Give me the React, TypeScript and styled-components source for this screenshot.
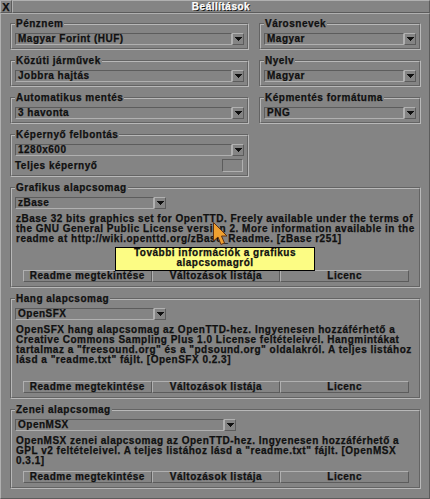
import React from "react";
import styled, { createGlobalStyle } from "styled-components";

const C = {
  bg: "#848484",
  light: "#b0b0b0",
  dark: "#5c5c5c",
  text: "#101010",
};

const Global = createGlobalStyle`
  html, body { margin: 0; padding: 0; background: ${C.bg}; }
  body { font-family: "Liberation Sans", Arial, sans-serif; }
`;

const Window = styled.div`
  position: relative;
  width: 430px;
  height: 499px;
  display: flex;
  flex-direction: column;
  background: ${C.bg};
  font: bold 10px/10px "Liberation Sans", Arial, sans-serif;
  letter-spacing: 0.5px;
  color: ${C.text};
  -webkit-text-stroke: 0.25px ${C.text};
  overflow: hidden;
`;

const TitleBar = styled.div`
  display: flex;
  height: 13px;
  flex: none;
`;

const CloseBox = styled.div`
  width: 12px;
  box-sizing: border-box;
  border: 1px solid;
  border-color: ${C.light} ${C.dark} ${C.dark} ${C.light};
  display: flex;
  align-items: center;
  justify-content: center;
  font-size: 11px;
  letter-spacing: 0;
`;

const Caption = styled.div`
  flex: 1;
  box-sizing: border-box;
  border: 1px solid;
  border-color: ${C.light} ${C.dark} ${C.dark} ${C.light};
  display: flex;
  align-items: center;
  justify-content: center;
  color: #fcfcfc;
  -webkit-text-stroke: 0.25px #fcfcfc;
  text-shadow: 1px 1px 0 #101010;
`;

const Panel = styled.div`
  flex: 1;
  box-sizing: border-box;
  border: 1px solid;
  border-color: ${C.light} ${C.dark} ${C.dark} ${C.light};
  padding: 5px 8px 0 9px;
  display: flex;
  flex-direction: column;
  gap: 6px;
`;

const TopRow = styled.div`
  display: flex;
  gap: 10px;
  align-items: flex-start;
`;

const Column = styled.div<{ $w: number }>`
  width: ${(p) => p.$w}px;
  display: flex;
  flex-direction: column;
  gap: 6px;
`;

const Frame = styled.fieldset<{ $pb?: number }>`
  margin: 0;
  min-width: 0;
  box-sizing: border-box;
  padding: 4px 3px ${(p) => p.$pb ?? 3}px 3px;
  border: 2px groove #b8b8b8;
  display: flex;
  flex-direction: column;
`;

const Legend = styled.legend`
  padding: 0 1px;
  margin: 0;
  line-height: 10px;
  height: 10px;
  white-space: nowrap;
`;

const Dropdown = styled.div<{ $w?: number }>`
  display: flex;
  height: 12px;
  width: ${(p) => (p.$w ? `${p.$w}px` : "auto")};
`;

const Field = styled.div`
  flex: 1;
  box-sizing: border-box;
  border: 1px solid;
  border-color: ${C.dark} ${C.light} ${C.light} ${C.dark};
  padding-left: 2px;
  line-height: 10px;
  white-space: nowrap;
  overflow: hidden;
`;

const ArrowBtn = styled.div`
  width: 12px;
  flex: none;
  box-sizing: border-box;
  border: 1px solid;
  border-color: ${C.light} ${C.dark} ${C.dark} ${C.light};
  display: flex;
  align-items: center;
  justify-content: center;
`;

const CheckRow = styled.div`
  display: flex;
  align-items: center;
  justify-content: space-between;
  height: 13px;
  margin-top: 3px;
`;

const CheckBox = styled.div`
  width: 21px;
  height: 13px;
  margin-right: 1px;
  box-sizing: border-box;
  border: 1px solid;
  border-color: ${C.dark} ${C.light} ${C.light} ${C.dark};
`;

const Desc = styled.div<{ $h: number }>`
  margin-top: 5px;
  height: ${(p) => p.$h}px;
  white-space: nowrap;
  line-height: 10px;
  padding-left: 1px;
`;

const DescLine = styled.div`
  height: 10px;
`;

const ButtonRow = styled.div`
  display: flex;
  margin: 6px 7px 0 8px;
`;

const Button = styled.div`
  flex: 1;
  height: 12px;
  box-sizing: border-box;
  border: 1px solid;
  border-color: ${C.light} ${C.dark} ${C.dark} ${C.light};
  text-align: center;
  line-height: 10px;
  white-space: nowrap;
`;

const Tooltip = styled.div`
  position: absolute;
  left: 115px;
  top: 247px;
  width: 200px;
  height: 24px;
  box-sizing: border-box;
  border: 1px solid #000;
  background: #fcfc84;
  text-align: center;
  line-height: 10px;
`;

const Cursor = styled.svg`
  position: absolute;
  left: 213px;
  top: 222px;
`;

const Arrow = () => (
  <svg width="7" height="4" viewBox="0 0 7 4" shapeRendering="crispEdges">
    <polygon points="0,0 7,0 3.5,4" fill={C.text} />
  </svg>
);

const Select = ({ value, w }: { value: string; w?: number }) => (
  <Dropdown $w={w}>
    <Field>{value}</Field>
    <ArrowBtn>
      <Arrow />
    </ArrowBtn>
  </Dropdown>
);

const SetFrame = ({
  title,
  value,
  w,
  lines,
  h,
}: {
  title: string;
  value: string;
  w: number;
  lines: string[];
  h: number;
}) => (
  <Frame $pb={4}>
    <Legend>{title}</Legend>
    <Select value={value} w={w} />
    <Desc $h={h}>
      {lines.map((l, i) => (
        <DescLine key={i}>{l}</DescLine>
      ))}
    </Desc>
    <ButtonRow>
      <Button>Readme megtekintése</Button>
      <Button>Változások listája</Button>
      <Button>Licenc</Button>
    </ButtonRow>
  </Frame>
);

export default function App() {
  return (
    <>
      <Global />
      <Window>
        <TitleBar>
          <CloseBox>X</CloseBox>
          <Caption>Beállítások</Caption>
        </TitleBar>
        <Panel>
          <TopRow>
            <Column $w={239}>
              <Frame>
                <Legend>Pénznem</Legend>
                <Select value="Magyar Forint (HUF)" />
              </Frame>
              <Frame>
                <Legend>Közúti járművek</Legend>
                <Select value="Jobbra hajtás" />
              </Frame>
              <Frame>
                <Legend>Automatikus mentés</Legend>
                <Select value="3 havonta" />
              </Frame>
              <Frame>
                <Legend>Képernyő felbontás</Legend>
                <Select value="1280x600" />
                <CheckRow>
                  <span>Teljes képernyő</span>
                  <CheckBox />
                </CheckRow>
              </Frame>
            </Column>
            <Column $w={162}>
              <Frame>
                <Legend>Városnevek</Legend>
                <Select value="Magyar" />
              </Frame>
              <Frame>
                <Legend>Nyelv</Legend>
                <Select value="Magyar" />
              </Frame>
              <Frame>
                <Legend>Képmentés formátuma</Legend>
                <Select value="PNG" />
              </Frame>
            </Column>
          </TopRow>
          <SetFrame
            title="Grafikus alapcsomag"
            value="zBase"
            w={151}
            h={50}
            lines={[
              "zBase 32 bits graphics set for OpenTTD. Freely available under the terms of",
              "the GNU General Public License version 2. More information available in the",
              "readme at http://wiki.openttd.org/zBase_Readme. [zBase r251]",
            ]}
          />
          <SetFrame
            title="Hang alapcsomag"
            value="OpenSFX"
            w={151}
            h={50}
            lines={[
              "OpenSFX hang alapcsomag az OpenTTD-hez. Ingyenesen hozzáférhető a",
              "Creative Commons Sampling Plus 1.0 License feltételeivel. Hangmintákat",
              "tartalmaz a \"freesound.org\" és a \"pdsound.org\" oldalakról. A teljes listához",
              "lásd a \"readme.txt\" fájlt. [OpenSFX 0.2.3]",
            ]}
          />
          <SetFrame
            title="Zenei alapcsomag"
            value="OpenMSX"
            w={221}
            h={29}
            lines={[
              "OpenMSX zenei alapcsomag az OpenTTD-hez. Ingyenesen hozzáférhető a",
              "GPL v2 feltételeivel. A teljes listához lásd a \"readme.txt\" fájlt. [OpenMSX",
              "0.3.1]",
            ]}
          />
        </Panel>
        <Tooltip>
          További információk a grafikus
          <br />
          alapcsomagról
        </Tooltip>
        <Cursor width="17" height="25" viewBox="0 0 17 25">
          <path
            d="M0.5 0.5 L0.5 19 L5 15 L8 22.5 L11.5 21 L8.5 14 L14 14 Z"
            fill="#f0a030"
            stroke="#603010"
            strokeWidth="1"
            strokeLinejoin="miter"
          />
        </Cursor>
      </Window>
    </>
  );
}
